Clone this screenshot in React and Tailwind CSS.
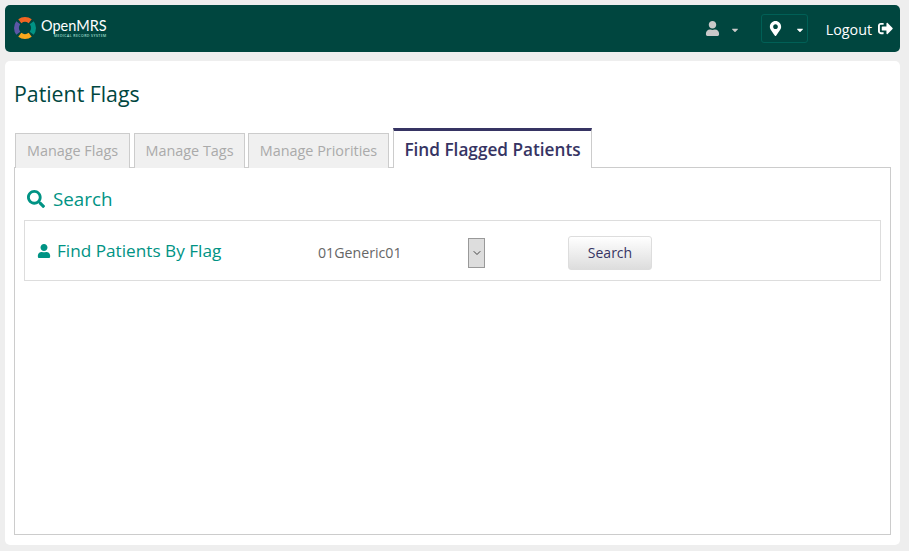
import React from "react";
import { FaUser, FaMapMarkerAlt, FaSearch, FaSignOutAlt, FaCaretDown } from "react-icons/fa";
import { LuChevronDown } from "react-icons/lu";

function Logo() {
  return (
    <svg width="24" height="24" viewBox="0 0 24 24" fill="none" strokeWidth="5" className="shrink-0 ml-[-1px] mt-[-1px]">
      <path d="M6.8 5.3 A8.5 8.5 0 0 1 17.2 5.3" stroke="#f26522" />
      <path d="M18.7 6.8 A8.5 8.5 0 0 1 18.7 17.2" stroke="#009384" />
      <path d="M17.2 18.7 A8.5 8.5 0 0 1 6.8 18.7" stroke="#f8a81c" />
      <path d="M5.3 17.2 A8.5 8.5 0 0 1 5.3 6.8" stroke="#5b57a6" />
    </svg>
  );
}

function Tab({ className, children }) {
  return (
    <div className={`h-[35px] flex items-center justify-center border border-[#ccc] border-b-0 bg-[#f0f0f0] text-[#aaa] text-[14.4px] mb-[-1px] ${className}`}>
      {children}
    </div>
  );
}

export default function App() {
  return (
    <div className="min-h-[551px] bg-[#eeeeee] pl-[5px] pr-[9px] py-[5px] flex flex-col gap-[9px] font-['Open_Sans',sans-serif]">
      <header className="h-[47px] rounded-[5px] bg-[#00463f] flex items-center pl-[9px] pr-[7px] text-white">
        <div className="flex items-center gap-[4px]">
          <Logo />
          <div className="flex flex-col items-end mt-[-1px]">
            <span className="text-[14.5px] leading-[16px] font-['Lato',sans-serif]">OpenMRS</span>
            <span className="text-[3.5px] leading-[4px] tracking-[0.45px] text-[#cfe]">MEDICAL RECORD SYSTEM</span>
          </div>
        </div>
        <div className="ml-auto flex items-center">
          <FaUser className="text-[#c9c9c9] text-[15px]" />
          <FaCaretDown className="text-[#c9c9c9] text-[10px] ml-[10px] mt-[3px]" />
          <div className="ml-[21px] h-[29px] w-[47px] rounded-[3px] border border-[#006056] flex items-center pl-[6px]">
            <FaMapMarkerAlt className="text-white text-[15px]" />
            <FaCaretDown className="text-white text-[10px] ml-[12px] mt-[3px]" />
          </div>
          <span className="ml-[18px] text-[14.3px] mt-[2px]">Logout</span>
          <FaSignOutAlt className="ml-[6px] text-[15px] text-white" />
        </div>
      </header>

      <main className="h-[484px] rounded-[5px] bg-white px-[9px] pt-[18px] flex flex-col">
        <h1 className="text-[21.3px] leading-[30px] text-[#00463f] mb-[18px]">Patient Flags</h1>
        <div className="flex items-end pl-px h-[40px] relative z-10">
          <Tab className="w-[115px]">Manage Flags</Tab>
          <Tab className="w-[111px] ml-[4px]">Manage Tags</Tab>
          <Tab className="w-[141px] ml-[3px]">Manage Priorities</Tab>
          <div className="h-[40px] w-[199px] ml-[4px] flex items-center justify-center border border-[#ccc] border-t-[3px] border-t-[#363463] border-b-0 bg-white text-[#363463] font-semibold text-[17.2px] mb-[-1px]">
            Find Flagged Patients
          </div>
        </div>
        <section className="h-[368px] border border-[#ccc] px-[9px] pt-[18px]">
          <div className="flex items-center gap-[8px] h-[26px] pl-[3px] text-[#009384]">
            <FaSearch className="text-[18px]" />
            <span className="text-[18.8px]">Search</span>
          </div>
          <div className="mt-[8px] h-[61px] border border-[#ddd] flex items-center pl-[12px]">
            <FaUser className="text-[#009384] text-[14px] mt-px" />
            <span className="ml-[6px] w-[261px] text-[#009384] text-[17.2px]">Find Patients By Flag</span>
            <span className="w-[150px] text-[14.2px] text-[#666] mt-[4px]">01Generic01</span>
            <span className="h-[30px] w-[17px] bg-[#ddd] border border-[#999] flex items-center justify-center text-[#444] mt-[4px]">
              <LuChevronDown className="text-[12px]" />
            </span>
            <button className="ml-[83px] h-[34px] w-[84px] pb-[2px] rounded-[3px] border border-[#ddd] bg-gradient-to-b from-white to-[#dddddd] text-[#363463] text-[14px] mt-[5px]">
              Search
            </button>
          </div>
        </section>
      </main>
    </div>
  );
}
